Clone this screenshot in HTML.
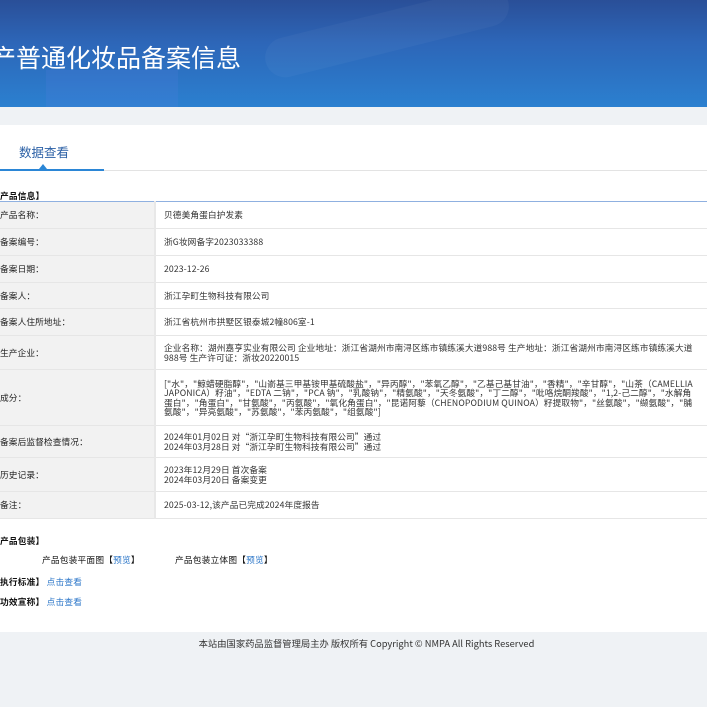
<!DOCTYPE html>
<html><head><meta charset="utf-8"><style>
*{margin:0;padding:0;box-sizing:border-box}
body{width:707px;height:707px;overflow:hidden;background:#eff2f5;font-family:"Liberation Sans","Noto Sans CJK SC",sans-serif;color:#333}
.hd{position:absolute;left:0;top:0;width:707px;height:107px;background:linear-gradient(180deg,#2a4f98 0%,#2d66b8 40%,#2b80d0 100%);overflow:hidden}
.hd .b1{position:absolute;left:262px;top:12px;width:250px;height:40px;border-radius:25px;background:rgba(255,255,255,.035);transform:rotate(-14deg)}
.hd .b2{position:absolute;left:46px;top:70px;width:132px;height:60px;background:rgba(90,130,230,.18)}
.hd h1{position:absolute;left:-9px;top:39px;font-size:25px;font-weight:normal;color:#fff;font-family:"Noto Sans CJK SC",sans-serif}
.main{position:absolute;left:0;top:125px;width:707px;height:507px;background:#fff}
.tab{position:absolute;left:19px;top:17px;font-size:12.5px;color:#2a5fa5;font-family:"Noto Sans CJK SC",sans-serif}
.tl{position:absolute;left:0;top:45px;width:707px;height:1px;background:#e3e3e3}
.tb{position:absolute;left:0;top:44px;width:104px;height:2px;background:#2b86d6}
.tri{position:absolute;left:39px;top:39px;width:0;height:0;border-left:4px solid transparent;border-right:4px solid transparent;border-bottom:5px solid #2b86d6}
.sec{position:absolute;left:0;font-size:8.7px;font-weight:bold;color:#111;font-family:"Noto Sans CJK SC",sans-serif;letter-spacing:.2px}
table{position:absolute;left:0;top:76px;width:707px;border-collapse:collapse;border-top:1px solid #8fb0e0;border-bottom:1px solid #8fb0e0;font-size:8.7px;font-family:"Noto Sans CJK SC",sans-serif;line-height:9.5px;letter-spacing:.1px}
td{border-bottom:1px solid #e6e6e6;vertical-align:middle}
td.l{width:155px;background:#f2f2f2;padding-left:0;color:#222;border-right:2px solid #e8e8e8}
td.v{padding:0 8px;color:#333}
.lk{color:#2b76c8}
.ft{position:absolute;left:0;width:707px;text-align:center;font-size:9.3px;color:#333;padding-left:26px;top:636px;font-family:"Noto Sans CJK SC",sans-serif}
</style></head><body>
<div class="hd"><div class="b1"></div><div class="b2"></div><h1>产普通化妆品备案信息</h1></div>
<div class="main">
<div class="tab">数据查看</div>
<div class="tl"></div><div class="tb"></div><div class="tri"></div>
<div class="sec" style="top:64px">产品信息】</div>
<table>
<tr style="height:27px"><td class="l">产品名称：</td><td class="v">贝德美角蛋白护发素</td></tr>
<tr style="height:27px"><td class="l">备案编号：</td><td class="v">浙G妆网备字2023033388</td></tr>
<tr style="height:27px"><td class="l">备案日期：</td><td class="v">2023-12-26</td></tr>
<tr style="height:26px"><td class="l">备案人：</td><td class="v">浙江孕町生物科技有限公司</td></tr>
<tr style="height:27px"><td class="l">备案人住所地址：</td><td class="v">浙江省杭州市拱墅区银泰城2幢806室-1</td></tr>
<tr style="height:34px"><td class="l">生产企业：</td><td class="v">企业名称：湖州嘉亨实业有限公司 企业地址：浙江省湖州市南浔区练市镇练溪大道988号 生产地址：浙江省湖州市南浔区练市镇练溪大道988号 生产许可证：浙妆20220015</td></tr>
<tr style="height:56px"><td class="l">成分：</td><td class="v">["水"，"鲸蜡硬脂醇"，"山嵛基三甲基铵甲基硫酸盐"，"异丙醇"，"苯氧乙醇"，"乙基己基甘油"，"香精"，"辛甘醇"，"山茶（CAMELLIA JAPONICA）籽油"，"EDTA 二钠"，"PCA 钠"，"乳酸钠"，"精氨酸"，"天冬氨酸"，"丁二醇"，"吡咯烷酮羧酸"，"1,2-己二醇"，"水解角蛋白"，"角蛋白"，"甘氨酸"，"丙氨酸"，"氧化角蛋白"，"昆诺阿藜（CHENOPODIUM QUINOA）籽提取物"，"丝氨酸"，"缬氨酸"，"脯氨酸"，"异亮氨酸"，"苏氨酸"，"苯丙氨酸"，"组氨酸"]</td></tr>
<tr style="height:32px"><td class="l">备案后监督检查情况：</td><td class="v">2024年01月02日 对“浙江孕町生物科技有限公司”通过<br>2024年03月28日 对“浙江孕町生物科技有限公司”通过</td></tr>
<tr style="height:34px"><td class="l">历史记录：</td><td class="v">2023年12月29日 首次备案<br>2024年03月20日 备案变更</td></tr>
<tr style="height:27px"><td class="l">备注：</td><td class="v">2025-03-12,该产品已完成2024年度报告</td></tr>
</table>
<div class="sec" style="top:409px">产品包装】</div>
<div class="sec" style="top:428px;left:42px;font-weight:normal;color:#111">产品包装平面图【<span class="lk">预览</span>】</div>
<div class="sec" style="top:428px;left:175px;font-weight:normal;color:#111">产品包装立体图【<span class="lk">预览</span>】</div>
<div class="sec" style="top:450px">执行标准】 <span class="lk" style="font-weight:normal">点击查看</span></div>
<div class="sec" style="top:470px">功效宣称】 <span class="lk" style="font-weight:normal">点击查看</span></div>
</div>
<div class="ft">本站由国家药品监督管理局主办 版权所有 Copyright © NMPA All Rights Reserved</div>
</body></html>
